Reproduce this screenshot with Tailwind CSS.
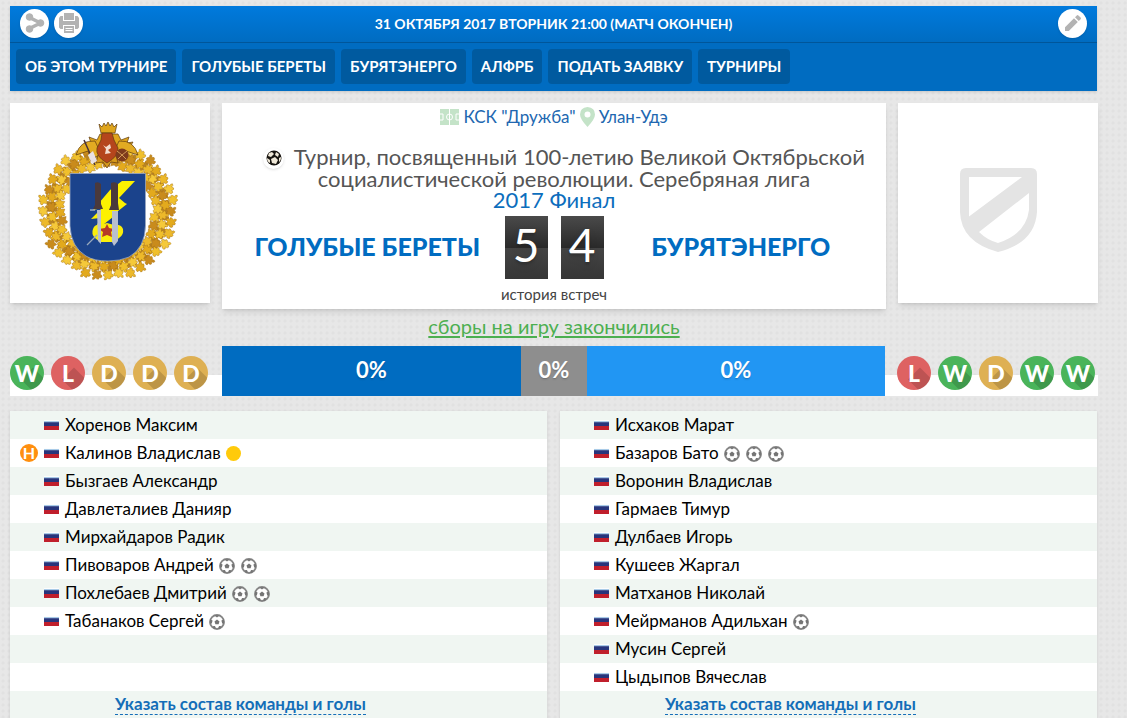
<!DOCTYPE html>
<html lang="ru">
<head>
    <meta charset="utf-8">
    <meta name="viewport" content="width=device-width, initial-scale=1">
    <title>Голубые Береты - Бурятэнерго</title>
    <script src="https://cdn.jsdelivr.net/npm/@tailwindcss/browser@4"></script>
</head>
<body class="font-['Lato','Open_Sans',sans-serif] text-black bg-[#e7e7e7] bg-[radial-gradient(circle,#e1e1e1_1px,transparent_2px)] bg-[size:6px_6px] overflow-x-hidden">
    <!-- Shared icons -->
    <svg class="hidden">
        <symbol id="flag" viewBox="0 0 15 11">
            <path fill="#fdfdfd" d="M0 0h15v3H0z"/>
            <path fill="#a9cbe8" d="M0 1h15v1.500H0z"/>
            <path fill="#27357c" d="M0 2.200h15v4H0z"/>
            <path fill="#c01f2c" d="M0 6h15v4H0z"/>
        </symbol>
        <symbol id="ball" viewBox="0 0 16 16">
            <circle cx="8" cy="8" r="7" fill="#fff" stroke="#858585" stroke-width="1.800"/>
            <g fill="#757575">
                <path d="M8 5.600l2.500 1.800-.9 2.900H6.400l-.9-2.900z"/>
                <path d="M5.200 1.200h5.600L8 3.600zM1 5.200l2.600 1.400-.8 3L.8 9.800zM15 5.200l-2.600 1.400.8 3 2 .2zM3.400 12.200l2.600-.2 1 2.800-2 .1zM12.600 12.200l-2.600-.2-1 2.800 2 .1z"/>
            </g>
        </symbol>
    </svg>

    <div class="pl-[10px] pr-[29px] pt-[6px]">
        <!-- Header -->
        <header class="mr-px bg-[#006cc1] shadow">
            <div class="grid grid-cols-[1fr_auto_1fr] items-center h-[37px] px-[10px] pb-[2px] bg-linear-to-b from-[#007add] to-[#006cc1] border-b border-[#00569a]">
                <div class="flex gap-[5px]">
                    <button aria-label="Поделиться" class="size-[29px] rounded-full bg-white shadow grid place-items-center">
                        <svg class="w-5 h-5" viewBox="0 0 20 20" fill="#b3b3b3" stroke="#b3b3b3">
                            <path d="M4.500 4.500L15.500 10 4.500 15.500" fill="none" stroke-width="3.500"/>
                            <circle cx="4.500" cy="4" r="3.300"/><circle cx="15.500" cy="10" r="3.300"/><circle cx="4.500" cy="16" r="3.300"/>
                        </svg>
                    </button>
                    <button aria-label="Печать" class="size-[29px] rounded-full bg-white shadow grid place-items-center">
                        <svg class="w-5 h-5" viewBox="0 0 20 20" fill="#b3b3b3">
                            <path d="M5 0h10v7H5z"/>
                            <path d="M1.500 3H4v5h12V3h2.500L20 5v9.500L18.500 16H16v-4H4v4H1.500L0 14.500V5z"/>
                            <path d="M5 13h10v7H5z"/>
                            <path d="M6.500 15.500h7M6.500 17.500h7" stroke="#fff"/>
                        </svg>
                    </button>
                </div>
                <h1 class="text-center text-[14px] font-bold text-white uppercase">31 октября 2017 вторник 21:00 (матч окончен)</h1>
                <button aria-label="Редактировать" class="justify-self-end size-[29px] rounded-full bg-white shadow grid place-items-center">
                    <svg class="w-4 h-4" viewBox="0 0 16 16" fill="#b3b3b3">
                        <path d="M0 12.200L9 3.200l3.800 3.800-9 9H0zM10 2.200L11.800.4q.8-.7 1.600 0l2.200 2.200q.7.800 0 1.600L13.800 6z"/>
                    </svg>
                </button>
            </div>
            <nav class="flex flex-wrap gap-[6px] p-[6px] pb-[7px] text-[15px] leading-[35px] font-bold text-white">
                <a href="#" class="px-[9px] rounded-sm bg-[#005a9f]">ОБ ЭТОМ ТУРНИРЕ</a>
                <a href="#" class="px-[9px] rounded-sm bg-[#005a9f]">ГОЛУБЫЕ БЕРЕТЫ</a>
                <a href="#" class="px-[9px] rounded-sm bg-[#005a9f]">БУРЯТЭНЕРГО</a>
                <a href="#" class="px-[9px] rounded-sm bg-[#005a9f]">АЛФРБ</a>
                <a href="#" class="px-[9px] rounded-sm bg-[#005a9f]">ПОДАТЬ ЗАЯВКУ</a>
                <a href="#" class="px-[9px] rounded-sm bg-[#005a9f]">ТУРНИРЫ</a>
            </nav>
        </header>

        <!-- Match -->
        <main>
            <section class="grid grid-cols-[200px_1fr_200px] gap-3 items-start mt-3">
                <div class="bg-white shadow-md">
                    <svg class="w-full" viewBox="0 0 200 200">
                        <g id="wreath"></g>
                        <!-- eagle -->
                        <g stroke="#5d3a10" stroke-width=".7">
                            <path fill="#dfa51c" d="M89 21l3 3 2-4 2 3 2-4 2 4 2-3 2 4 3-3-2 9H91z"/>
                            <path fill="#dfa51c" d="M90 31l-3 6-8-3 2 6-6-1 5 8h38l5-8-6 1 2-6-8 3-3-6z"/>
                            <path fill="#e2ab22" d="M85 38q-15-1-19 14l12-4 3 9 10-6zM109 38q15-1 19 14l-12-4-3 9-10-6z"/>
                            <path fill="#d7991a" d="M88 52l-2 8 7-1 4 6 4-6 7 1-2-8z"/>
                            <path fill="#b5451c" d="M92 30h10l2 7 4 8q1 8-11 15Q85 53 87 45l4-8z"/>
                        </g>
                        <path d="M93 42l3 2 4-3 1 4-3 2 3 3-6 1 1-5z" fill="#f3ddcf"/>
                        <path d="M74 37l11 25M80 57l6-3" stroke="#493239" stroke-width="1.500"/>
                        <path d="M78 52l5-4 4 10-5 3z" fill="#e9e1e4"/>
                        <circle cx="112" cy="52" r="6.500" fill="#7e3b1d"/>
                        <path d="M107 48l5 4 5-4M108 56l4-4 4 4" stroke="#d39a55" fill="none"/>
                        <!-- shield -->
                        <path fill="#1b438c" stroke="#9aa7c0" stroke-width=".8" d="M60 70.500h75.500v52Q135 145 119 154q-9 4-21 4-14 0-22-5-15-9-16-30z"/>
                        <path fill="#fdf100" d="M125 78l-16 17 6 5 2 1-14 11 0 2-19 15 6-14-9 1 11-11-9 2 17-20 12-9z"/>
                        <path fill="#4a393c" d="M85 80q3-2 6 1v20l2 5H83l2-4zM101 80q4-2 7 1v19l1 7H99l2-5z"/>
                        <path fill="#faee0c" d="M83 126q2-5 7-4l7-2 7 2q7-1 9 4 1 6-4 9l-5 4h-14l-5-4q-4-4-2-9z"/>
                        <path fill="#b63a28" d="M97 121l2 4 5 1-3 3 1 5-5-2-5 2 1-5-4-3 6-1z"/>
                        <path fill="#b8bfce" d="M87 107h4v34l-3-3zM102 108h6v30l-4 5-2-4z"/>
                        <path d="M77 142l10-10M80 107h5" stroke="#97a9bd" stroke-width="1.300"/>
                    </svg>
                </div>

                <div class="bg-white shadow-md text-center px-2 pt-[4px] pb-[4px]">
                    <div class="flex justify-center items-center gap-1 text-[17px] leading-5 text-[#2167b0]">
                        <svg class="w-[19px] h-4" viewBox="0 0 19 16">
                            <path fill="#c4e3c8" d="M0 0h19v16H0z"/>
                            <path stroke="#fff" fill="none" d="M9.500 0v16M0 5h3v6H0M19 5h-3v6h3"/>
                            <circle cx="9.500" cy="8" r="3" fill="none" stroke="#fff"/>
                        </svg>
                        <a href="#">КСК "Дружба"</a>
                        <svg class="w-[15px] h-5" viewBox="0 0 15 20">
                            <path fill="#c4e3c8" fill-rule="evenodd" d="M7.500 0Q15 .6 15 7.500 15 12 7.500 20 0 12 0 7.500 0 .6 7.500 0zm0 4.500a3 3 0 1 0 0 6 3 3 0 1 0 0-6z"/>
                        </svg>
                        <a href="#">Улан-Удэ</a>
                    </div>
                    <h2 class="mt-[19px] pl-5 text-[22px] leading-[22px] text-[#555]">
                        <span class="inline-grid place-items-center size-[21px] -my-1 mr-1 rounded-full bg-white shadow align-[-1px]">
                            <svg class="w-4 h-4" viewBox="0 0 16 16">
                                <circle cx="8" cy="8" r="7.500" fill="#16130f"/>
                                <path fill="#efe8d8" d="M3 3l3-1 2 2-3 3-3-1zM10 2l3 2-1 3-3-2zM5 9l4-2 3 3-2 4-4-1zM1 8l3 2v3Q1 12 1 8zM13 8l2-1q0 4-2 5z"/>
                            </svg>
                        </span>
                        Турнир, посвященный 100-летию Великой Октябрьской<br>социалистической революции. Серебряная лига
                    </h2>
                    <a href="#" class="block text-[22px] leading-[20px] text-[#0c6ebd] pb-[6px]">2017 Финал</a>
                    <div class="grid grid-cols-[1fr_auto_1fr] items-center text-[25px] leading-8 font-black text-[#006cc1]">
                        <a href="#" class="pb-1">ГОЛУБЫЕ БЕРЕТЫ</a>
                        <div class="flex gap-[13px] text-[46px] leading-[58px] font-normal text-white text-shadow-lg">
                            <span class="w-[43px] h-[63px] bg-[linear-gradient(#4a4a4a,#2a2a2a_50%,#444_50%,#363636)]">5</span>
                            <span class="w-[43px] h-[63px] bg-[linear-gradient(#4a4a4a,#2a2a2a_50%,#444_50%,#363636)]">4</span>
                        </div>
                        <a href="#" class="pb-1">БУРЯТЭНЕРГО</a>
                    </div>
                    <a href="#" class="block mt-1 text-[15px] leading-[22px] text-[#444]">история встреч</a>
                </div>

                <div class="bg-white shadow-md">
                    <svg class="w-full" viewBox="0 0 200 200">
                        <path fill="#e4e4e4" fill-rule="evenodd" d="M68 65h65q6 0 6 6v38q-2 31-39 40-37-10-38-40V71q0-6 6-6zM71 74v39.500L124 74zM131 90l-50 39q8 8 19 11 28-9 31-33z"/>
                    </svg>
                </div>
            </section>

            <div class="text-center leading-[35px] h-[37px]">
                <a href="#" class="text-[20px] text-[#4caf50] underline decoration-2 underline-offset-2">сборы на игру закончились</a>
            </div>

            <!-- Form and forecast -->
            <section class="grid grid-cols-[212px_1fr_213px] h-[50px]">
                <div data-form="WLDDD" class="flex gap-[7px] pt-[10px] bg-linear-to-b from-transparent from-58% to-white to-58%"></div>
                <div class="grid grid-cols-[299fr_66fr_298fr] text-center text-[22px] leading-[47px] font-bold text-white text-shadow-sm">
                    <div class="bg-[#006cc1]">0%</div>
                    <div class="bg-[#8e8e8e]">0%</div>
                    <div class="bg-[#2196f3]">0%</div>
                </div>
                <div data-form="LWDWW" class="flex gap-[7px] pt-[10px] pl-3 bg-linear-to-b from-transparent from-58% to-white to-58%"></div>
            </section>

            <!-- Squads -->
            <section class="mr-px mt-[15px] grid grid-cols-2 gap-[13px]">
                <div class="bg-white shadow">
                    <ul id="home"></ul>
                    <div class="h-[27px] pl-[105px] pt-px bg-[#f0f6f2]">
                        <a href="#" class="text-[17px] leading-6 font-bold text-[#146eb8] border-b border-dashed border-[#146eb8]">Указать состав команды и голы</a>
                    </div>
                </div>
                <div class="bg-white shadow">
                    <ul id="away"></ul>
                    <div class="h-[27px] pl-[105px] pt-px bg-[#f0f6f2]">
                        <a href="#" class="text-[17px] leading-6 font-bold text-[#146eb8] border-b border-dashed border-[#146eb8]">Указать состав команды и голы</a>
                    </div>
                </div>
            </section>
        </main>
    </div>

    <script>
        const home = [
            { name: 'Хоренов Максим' },
            { name: 'Калинов Владислав', role: 'Н', card: true },
            { name: 'Бызгаев Александр' },
            { name: 'Давлеталиев Данияр' },
            { name: 'Мирхайдаров Радик' },
            { name: 'Пивоваров Андрей', goals: 2 },
            { name: 'Похлебаев Дмитрий', goals: 2 },
            { name: 'Табанаков Сергей', goals: 1 }
        ];

        const away = [
            { name: 'Исхаков Марат' },
            { name: 'Базаров Бато', goals: 3 },
            { name: 'Воронин Владислав' },
            { name: 'Гармаев Тимур' },
            { name: 'Дулбаев Игорь' },
            { name: 'Кушеев Жаргал' },
            { name: 'Матханов Николай' },
            { name: 'Мейрманов Адильхан', goals: 1 },
            { name: 'Мусин Сергей' },
            { name: 'Цыдыпов Вячеслав' }
        ];

        const ROWS = 10;

        function renderSquad(id, players) {
            let html = '';
            for (let i = 0; i < ROWS; i++) {
                const p = players[i];
                html += '<li class="flex items-center h-7 pl-[10px] odd:bg-[#f0f6f2] text-[17px] leading-7">';
                if (p) {
                    html += `<span class="w-6 shrink-0">${p.role ? `<b class="block size-[18px] rounded-full bg-[#ff8f0f] text-white text-center text-base leading-[18px]">${p.role}</b>` : ''}</span>`;
                    html += '<svg class="w-[15px] h-[11px] mr-[6px]"><use href="#flag"/></svg>';
                    html += `<a href="#" class="mr-[5px] pb-px">${p.name}</a>`;
                    if (p.card) html += '<span class="size-[15px] rounded-full bg-[#ffca0a]"></span>';
                    for (let g = 0; g < (p.goals || 0); g++) {
                        html += '<svg class="size-4 mr-[6px] mt-px"><use href="#ball"/></svg>';
                    }
                }
                html += '</li>';
            }
            document.getElementById(id).innerHTML = html;
        }

        // W - win, L - loss, D - draw
        const formColors = {
            W: 'bg-[#4ab45a]',
            L: 'bg-[#de6262]',
            D: 'bg-[#deb053]'
        };

        function renderForm(el) {
            el.innerHTML = [...el.dataset.form].map(r =>
                `<span class="relative size-[34px] overflow-hidden rounded-full text-white text-center text-[23px] leading-[34px] font-black ${formColors[r]}"><i class="absolute left-[17px] top-[9px] w-6 h-[17px] origin-left rotate-45 bg-black/15"></i><span class="relative">${r}</span></span>`
            ).join('');
        }

        // Oak leaves around the shield
        function renderWreath() {
            const colors = ['#e3aa1d', '#f5c93a', '#c98b1c', '#edb92a', '#f0c02c'];
            let html = '<circle cx="98" cy="107" r="56" fill="none" stroke="#b98426" stroke-width="11" stroke-dasharray="4 2"/>';
            for (let ring = 0; ring < 3; ring++) {
                for (let i = 0; i < 36; i++) {
                    const a = i * 10 + ring * 4;
                    const tilt = (a < 180 ? -1 : 1) * (35 - ring * 35);
                    const r = 42 + ring * 8 + (i * 7 % 4);
                    html += `<path transform="rotate(${a} 98 108) translate(98 ${r}) rotate(${tilt})" d="M0-6q2 1 1 3 3-1 3 1 0 1-1 2 3 0 2 2-1 2-3 1L0 6l-2-3q-3 1-3-1t2-2q-2-1-1-2t3-1q-1-2 1-3z" fill="${colors[(i * 3 + ring) % 5]}" stroke="#a06d14" stroke-width=".4"/>`;
                }
            }
            document.getElementById('wreath').innerHTML = html;
        }

        renderSquad('home', home);
        renderSquad('away', away);
        document.querySelectorAll('[data-form]').forEach(renderForm);
        renderWreath();
    </script>
</body>
</html>
